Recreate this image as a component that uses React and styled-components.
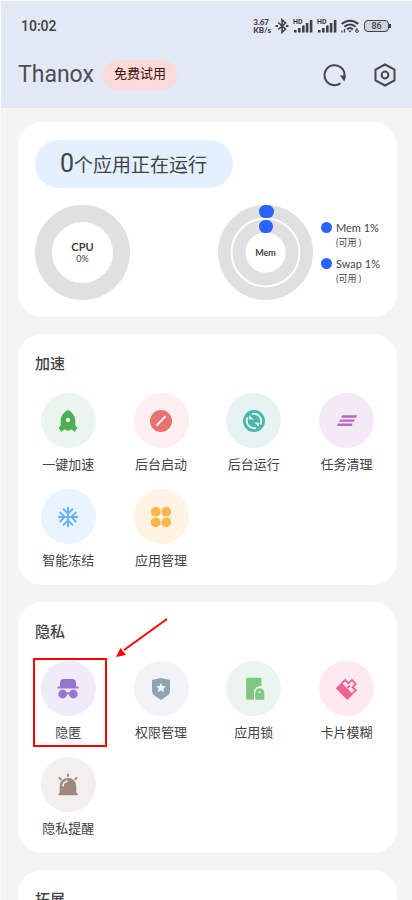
import React from "react";
import styled, { createGlobalStyle } from "styled-components";
import { RiShieldStarFill } from "react-icons/ri";
import { MdAcUnit } from "react-icons/md";

const RocketIcon = () => (
  <svg viewBox="0 0 24 24" fill="currentColor">
    <path
      fillRule="evenodd"
      d="M12 1C8 3 4.700 7 4.700 12v4.400L2.600 18.800 5.200 23 8 20.600h1.600l.9 1h3l.9-1H16l2.800 2.400 2.600-4.200-2.100-2.400V12C19.300 7 16 3 12 1Zm0 7.800a2.200 2.200 0 1 1 0 4.400 2.200 2.200 0 0 1 0-4.400Z"
    />
  </svg>
);

const ForbidIcon = () => (
  <svg viewBox="0 0 24 24" fill="none">
    <circle cx="12" cy="12" r="11" fill="currentColor" />
    <path d="M7.500 16.800 16.500 7.200" stroke="#feeff0" strokeWidth="2" />
  </svg>
);

const SyncIcon = () => (
  <svg viewBox="0 0 24 24" fill="none">
    <circle cx="12" cy="12" r="11" fill="currentColor" />
    <g stroke="#e6f3f2" strokeWidth="1.900">
      <path d="M5.800 8.400A7.200 7.200 0 0 0 14 18.900" />
      <path d="M18.200 15.600A7.200 7.200 0 0 0 10 5.100" />
    </g>
    <path d="M7.200 6.200 11.600 10.600H7.200ZM16.800 17.800 12.400 13.400H16.800Z" fill="#e6f3f2" />
  </svg>
);

const ClearIcon = () => (
  <svg viewBox="0 0 24 24" fill="currentColor">
    <path d="M7.200 6.200h14.800l-.8 2.500H6.400zM5 10.400h14.800l-.8 2.400H4.200zM2.800 14.600h14.800l-.8 2.400H2z" />
  </svg>
);

const AppsIcon = () => (
  <svg viewBox="0 0 24 24" fill="currentColor">
    <circle cx="6.700" cy="6.700" r="4.900" />
    <circle cx="17.300" cy="6.700" r="4.900" />
    <circle cx="6.700" cy="17.300" r="4.900" />
    <circle cx="17.300" cy="17.300" r="4.900" />
  </svg>
);

const SpyIcon = () => (
  <svg viewBox="0 0 24 24" fill="currentColor">
    <path d="M8 2h8a4 4 0 0 1 4 4v3.600h2.400v1.900H1.600V9.600H4V6a4 4 0 0 1 4-4Z" />
    <circle cx="6.700" cy="17" r="4.400" />
    <circle cx="17.300" cy="17" r="4.400" />
    <path d="M10 15.400h4v2h-4z" />
  </svg>
);

const LockIcon = () => (
  <svg viewBox="0 0 24 24" fill="currentColor">
    <path d="M5 .8h13.600a.8.800 0 0 1 .8.800V9a6.500 6.500 0 0 0-7.400 6.500V22.800H5a.8.800 0 0 1-.8-.8V1.600A.8.800 0 0 1 5 .8Z" />
    <path
      fillRule="evenodd"
      d="M13.300 22.800V15.800a4.500 4.500 0 0 1 9 0v7Zm4.500-8.200a1.300 1.300 0 0 0-1.300 1.400h2.600a1.300 1.300 0 0 0-1.300-1.400Z"
    />
  </svg>
);

const BrushIcon = () => (
  <svg viewBox="0 0 24 24" fill="none">
    <path d="M.8 11.200 6.400 5.600 18 17.200 12.300 23Z" fill="currentColor" />
    <path
      d="M7 6 10.200 3 13.400 6.200 16.900 3 20.800 6.900 17.600 10.200 20.800 13.200 17.400 16.600M12.400 11 15 8.600"
      stroke="currentColor"
      strokeWidth="1.900"
    />
  </svg>
);

const AlarmIcon = () => (
  <svg viewBox="0 0 24 24" fill="none">
    <path d="M3.700 20V13.200a8.300 8.300 0 0 1 16.600 0V20h1.400v2.200H2.500V20Z" fill="currentColor" />
    <path d="M7 13.400a5 5 0 0 1 4.600-5.200" stroke="#f2efed" strokeWidth="1.800" />
    <path d="M12 .8v3M2.800 4.400l2.700 2.300M21.200 4.400l-2.700 2.300" stroke="currentColor" strokeWidth="2" />
  </svg>
);

const RefreshIcon = () => (
  <svg width="26" height="26" viewBox="0 0 26 26" fill="none">
    <path d="M22.500 14A10 10 0 1 0 18.500 21.200" stroke="#46464f" strokeWidth="2" />
    <path d="M18 13.400h5.800v2l-1.600 4Z" fill="#46464f" />
  </svg>
);

const SettingsIcon = () => (
  <svg width="26" height="26" viewBox="0 0 26 26" fill="none" stroke="#46464f" strokeWidth="2">
    <path d="M13 2.500 22.500 7.700v10.600L13 23.500 3.500 18.300V7.700Z" />
    <circle cx="13" cy="13" r="3.400" />
  </svg>
);

const BluetoothIcon = () => (
  <svg width="14" height="16" viewBox="0 0 14 16" fill="none" stroke="#3d4048" strokeWidth="1.600">
    <path d="M3.200 4.500 10.500 11 7 14.300V1.700L10.500 5 3.200 11.500" />
    <path d="M.6 8h2.400M11 8h2.400" strokeWidth="2.200" />
  </svg>
);

const SignalIcon = () => (
  <svg width="20" height="16" viewBox="0 0 20 16" fill="#3d4048">
    <path d="M1 12h2.600v2.500H1zM5 10h2.600v4.500H5zM9 7.500h2.600v7H9zM12.800 5h2.600v9.500h-2.600zM16.800 2h2.600v12.500h-2.600z" />
  </svg>
);

const WifiIcon = () => (
  <svg width="19" height="16" viewBox="0 0 19 16" fill="none" stroke="#3d4048" strokeWidth="2">
    <path d="M.8 6a12 12 0 0 1 16.400 0M3.400 8.800a8 8 0 0 1 11.200 0M6 11.400a4.500 4.500 0 0 1 6 0" />
    <path d="M7.200 12.500h3.600L9 14.600Z" fill="#3d4048" stroke="none" />
    <path d="M1 14.500v-2M3.500 14.500v-3.500" strokeWidth="1.300" />
    <circle cx="16" cy="13" r="1.400" strokeWidth="1" />
    <path d="M14.700 12.700 16 10" strokeWidth="1" />
  </svg>
);

const boost = [
  { label: "一键加速", color: "#4caf50", bg: "#ebf5ee", icon: <RocketIcon /> },
  { label: "后台启动", color: "#e57373", bg: "#feeff0", icon: <ForbidIcon /> },
  { label: "后台运行", color: "#4db6ac", bg: "#e6f3f2", icon: <SyncIcon /> },
  { label: "任务清理", color: "#ba68c8", bg: "#f4e9f7", icon: <ClearIcon /> },
  { label: "智能冻结", color: "#64b5f6", bg: "#e9f4fe", icon: <MdAcUnit /> },
  { label: "应用管理", color: "#ffb74d", bg: "#fff4e4", icon: <AppsIcon /> },
];

const privacy = [
  { label: "隐匿", color: "#9575cd", bg: "#efebf8", icon: <SpyIcon />, marked: true },
  { label: "权限管理", color: "#90a4ae", bg: "#f1f4f6", icon: <RiShieldStarFill /> },
  { label: "应用锁", color: "#81c784", bg: "#ebf5ed", icon: <LockIcon /> },
  { label: "卡片模糊", color: "#f06292", bg: "#fde9ef", icon: <BrushIcon /> },
  { label: "隐私提醒", color: "#a1887f", bg: "#f2efed", icon: <AlarmIcon /> },
];

const Section = ({ title, items }) => {
  return (
    <Card>
      <SectionTitle>{title}</SectionTitle>
      <Grid>
        {items.map((item) => (
          <Feature key={item.label}>
            <FeatureIcon $color={item.color} $bg={item.bg}>
              {item.icon}
            </FeatureIcon>
            <span>{item.label}</span>
            {item.marked && (
              <>
                <Marker />
                <Arrow width="54" height="44" viewBox="0 0 54 44">
                  <path d="M52 2 9 33" stroke="#fe0000" strokeWidth="2" />
                  <path d="M1 40 5.500 31 11 38Z" fill="#fe0000" />
                </Arrow>
              </>
            )}
          </Feature>
        ))}
      </Grid>
    </Card>
  );
};

const App = () => {
  return (
    <Page>
      <GlobalStyle />
      <Header>
        <StatusBar>
          <Clock>10:02</Clock>
          <StatusIcons>
            <Speed>
              3.67
              <br />
              KB/s
            </Speed>
            <BluetoothIcon />
            <Signal>
              <SignalIcon />
              <small>HD</small>
            </Signal>
            <Signal>
              <SignalIcon />
              <small>HD</small>
            </Signal>
            <WifiIcon />
            <Battery>86</Battery>
          </StatusIcons>
        </StatusBar>
        <AppBar>
          <h1>Thanox</h1>
          <Trial>免费试用</Trial>
          <Actions>
            <IconButton aria-label="刷新">
              <RefreshIcon />
            </IconButton>
            <IconButton aria-label="设置">
              <SettingsIcon />
            </IconButton>
          </Actions>
        </AppBar>
      </Header>

      <Content>
        <Card>
          <Running>
            <b>0</b>个应用正在运行
          </Running>
          <Charts>
            <Chart>
              <svg width="95" height="95" viewBox="0 0 95 95" fill="none">
                <circle cx="47.500" cy="47.500" r="39" stroke="#e0e0e0" strokeWidth="17" />
              </svg>
              <ChartText>
                <strong>CPU</strong>
                <span>0%</span>
              </ChartText>
            </Chart>
            <MemGroup>
              <Chart>
                <svg width="95" height="95" viewBox="0 0 95 95" fill="none">
                  <circle cx="47.500" cy="47.500" r="41.200" stroke="#e0e0e0" strokeWidth="12.600" />
                  <circle cx="47.500" cy="47.500" r="26.500" stroke="#e0e0e0" strokeWidth="13" />
                  <rect x="41" y="0" width="15" height="13" rx="6.400" fill="#2962ff" />
                  <rect x="41" y="15" width="14" height="13" rx="6.400" fill="#2962ff" />
                </svg>
                <ChartText $small>
                  <strong>Mem</strong>
                </ChartText>
              </Chart>
              <Legend>
                <li>
                  Mem 1%<small>(可用 )</small>
                </li>
                <li>
                  Swap 1%<small>(可用 )</small>
                </li>
              </Legend>
            </MemGroup>
          </Charts>
        </Card>
        <Section title="加速" items={boost} />
        <Section title="隐私" items={privacy} />
        <Section title="拓展" items={[]} />
      </Content>
    </Page>
  );
};

const GlobalStyle = createGlobalStyle`
  * {
    box-sizing: border-box;
  }
  body {
    margin: 0;
    background: #f4f4f4;
    color: #434345;
    font-family: Roboto, "Noto Sans CJK SC", sans-serif;
  }
  button {
    border: none;
    padding: 0;
    background: none;
    color: inherit;
    font: inherit;
    cursor: pointer;
  }
  svg {
    display: block;
  }
`;

const Page = styled.div`
  display: flex;
  flex-direction: column;
  height: 100vh;
  border: solid #fbfbfb;
  border-width: 1px 0 0 1px;
`;

const Header = styled.header`
  flex: none;
  background: #e3e8f5;
  padding: 14px 14px 18px 17px;
`;

const StatusBar = styled.div`
  display: flex;
  align-items: center;
  justify-content: space-between;
  height: 22px;
  padding: 0 6px 0 3px;
  color: #3d4048;
`;

const Clock = styled.span`
  font-size: 14px;
  font-weight: 500;
`;

const StatusIcons = styled.div`
  display: flex;
  align-items: center;
  gap: 4px;
`;

const Speed = styled.div`
  font-family: Lato, sans-serif;
  font-size: 8px;
  font-weight: 900;
  line-height: 8px;
`;

const Signal = styled.div`
  position: relative;

  small {
    position: absolute;
    top: 1px;
    left: 0;
    font-size: 7px;
    font-weight: 700;
    line-height: 6px;
  }
`;

const Battery = styled.div`
  position: relative;
  width: 25px;
  height: 12px;
  margin-right: 3px;
  border: 1px solid #3d4048;
  border-radius: 4px;
  background: #cfd3de;
  font-size: 9px;
  font-weight: 500;
  line-height: 10px;
  text-align: center;

  &::after {
    content: "";
    position: absolute;
    top: 3px;
    right: -3px;
    width: 2px;
    height: 4px;
    background: #3d4048;
  }
`;

const AppBar = styled.div`
  display: flex;
  align-items: center;
  height: 30px;
  margin-top: 23px;

  h1 {
    margin: 0;
    color: #4c4d56;
    font-size: 23px;
    font-weight: 400;
    line-height: 32px;
  }
`;

const Trial = styled.button`
  && {
    height: 30px;
    margin-left: 9px;
    padding: 0 11px 2px;
    border-radius: 15px;
    background: #fadbd9;
    color: #410e0b;
    font-size: 13px;
    line-height: 28px;
  }
`;

const Actions = styled.div`
  display: flex;
  gap: 24px;
  margin-left: auto;
`;

const IconButton = styled.button`
  width: 26px;
  height: 26px;
`;

const Content = styled.main`
  flex: 1;
  min-height: 0;
  display: flex;
  flex-direction: column;
  gap: 17px;
  padding: 14px 15px 17px 17px;
  overflow-y: auto;
  scrollbar-width: none;
`;

const Card = styled.section`
  flex: none;
  padding: 18px 4px 14px;
  border-radius: 24px;
  background: #fff;
`;

const Running = styled.button`
  && {
    display: flex;
    align-items: center;
    height: 48px;
    margin-left: 13px;
    padding: 0 26px 2px 25px;
    border-radius: 24px;
    background: #e2f0ff;
    font-size: 19px;
  }

  b {
    font-size: 25px;
    font-weight: 400;
  }
`;

const Charts = styled.div`
  display: flex;
  justify-content: space-between;
  margin-top: 17px;
  padding: 0 13px 3px;
`;

const MemGroup = styled.div`
  display: flex;
  align-items: center;
  gap: 8px;
`;

const Chart = styled.div`
  display: grid;
  place-items: center;

  > * {
    grid-area: 1 / 1;
  }
`;

const ChartText = styled.div`
  display: flex;
  flex-direction: column;
  align-items: center;
  font-family: Lato, sans-serif;
  font-size: 9px;
  line-height: 12px;

  strong {
    font-size: ${({ $small }) => ($small ? "9px" : "11px")};
  }
`;

const Legend = styled.ul`
  display: flex;
  flex-direction: column;
  gap: 6px;
  margin: 0;
  padding: 0;
  list-style: none;
  font-family: Lato, "Noto Sans CJK SC", sans-serif;
  font-size: 11px;
  line-height: 15px;

  li {
    display: grid;
    grid-template-columns: 11px auto;
    column-gap: 4px;
    align-items: center;
  }

  li::before {
    content: "";
    width: 11px;
    height: 11px;
    border-radius: 50%;
    background: #2962ff;
  }

  small {
    grid-column: 2;
    font-size: 9px;
  }
`;

const SectionTitle = styled.h2`
  margin: 2px 13px 19px;
  font-size: 15px;
  font-weight: 500;
  line-height: 20px;
`;

const Grid = styled.div`
  display: grid;
  grid-template-columns: repeat(4, 1fr);
  row-gap: 14px;
`;

const Feature = styled.button`
  && {
    position: relative;
    display: flex;
    flex-direction: column;
    align-items: center;
    gap: 7px;
    font-size: 13px;
    line-height: 20px;
  }
`;

const FeatureIcon = styled.div`
  display: grid;
  place-items: center;
  width: 55px;
  height: 55px;
  border-radius: 50%;
  background: ${({ $bg }) => $bg};
  color: ${({ $color }) => $color};

  svg {
    width: 24px;
    height: 24px;
  }
`;

const Marker = styled.i`
  position: absolute;
  inset: -3px 8px -4px 11px;
  border: 2px solid #fe0000;
`;

const Arrow = styled.svg`
  position: absolute;
  left: 93px;
  top: -44px;
  z-index: 1;
  fill: none;
  pointer-events: none;
`;

export default App;
